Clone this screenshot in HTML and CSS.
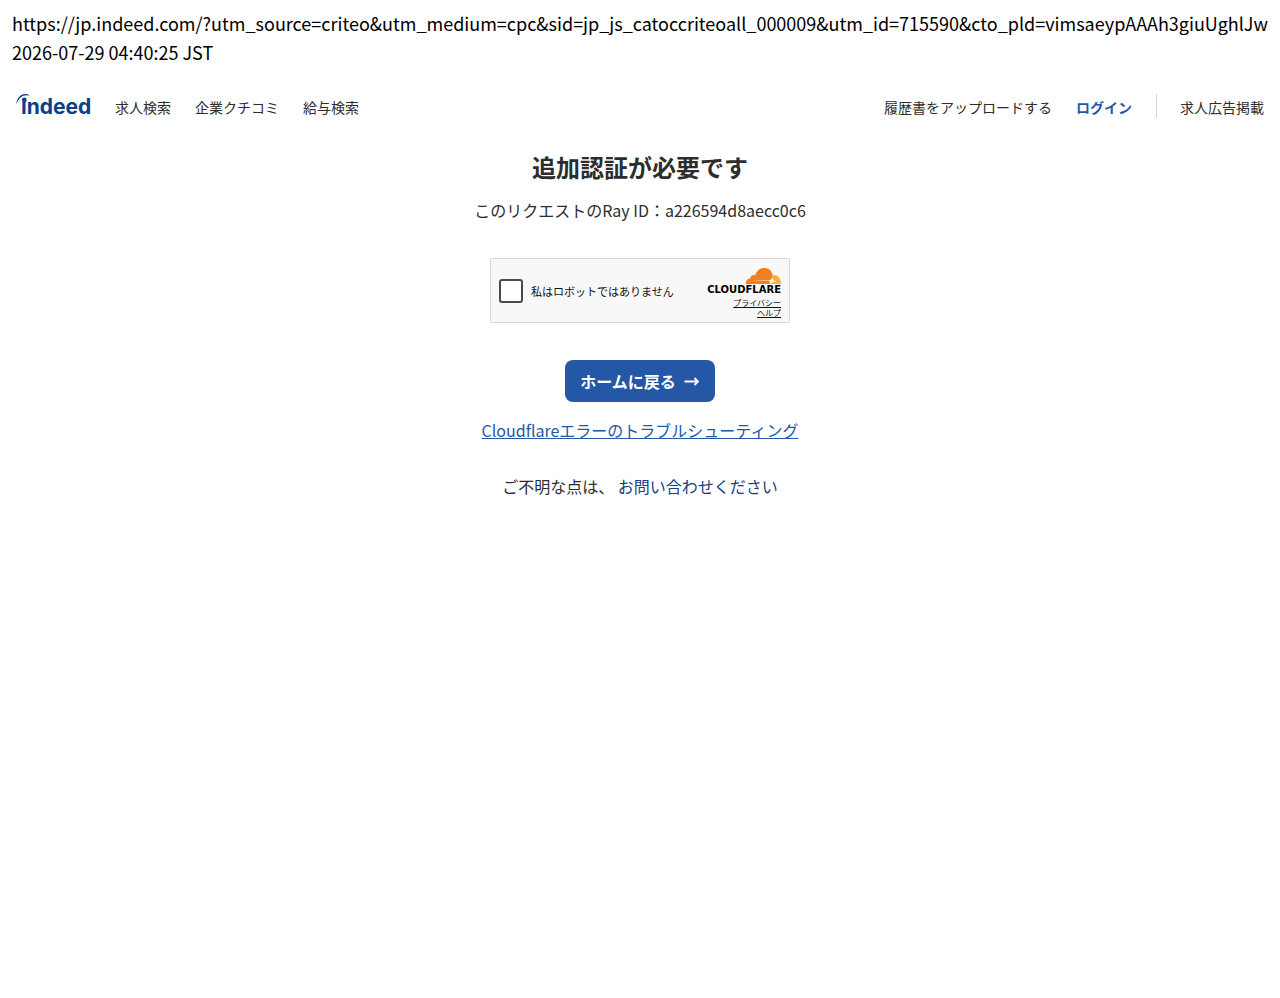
FILE: index.html
```
<!DOCTYPE html>
<html lang="ja">
<head>
<meta charset="utf-8">
<meta name="viewport" content="width=device-width, initial-scale=1">
<title>追加認証が必要です</title>
<link rel="stylesheet" href="styles.css">
</head>
<body>
<div class="capture-info">
  <p>https://jp.indeed.com/?utm_source=criteo&amp;utm_medium=cpc&amp;sid=jp_js_catoccriteoall_000009&amp;utm_id=715590&amp;cto_pld=vimsaeypAAAh3giuUghlJw</p>
  <p>2026-07-29 04:40:25 JST</p>
</div>
<header class="header">
  <nav class="nav">
    <a class="logo" href="#" aria-label="indeed">
      <svg width="75" height="28" viewBox="0 0 75 28">
        <text class="logo-text" x="5" y="21">ındeed</text>
        <circle cx="8.300" cy="7" r="2.400" fill="#0a3f8c"/>
        <path d="M.3 11.500C.6 5.500 4.300 1 9.500 1c1.700 0 3.200.6 4.100 1.800C8.500.9 3 3.500.3 11.500Z" fill="#0a3f8c"/>
      </svg>
    </a>
    <a href="#">求人検索</a>
    <a href="#">企業クチコミ</a>
    <a href="#">給与検索</a>
  </nav>
  <nav class="nav">
    <a href="#">履歴書をアップロードする</a>
    <a class="login" href="#">ログイン</a>
    <a class="employer" href="#">求人広告掲載</a>
  </nav>
</header>
<main class="main">
  <h1>追加認証が必要です</h1>
  <p class="ray">このリクエストのRay ID：a226594d8aecc0c6</p>
  <div class="widget">
    <label class="check"><input type="checkbox">私はロボットではありません</label>
    <div class="brand">
      <svg width="76" height="28" viewBox="0 0 76 28" role="img" aria-label="Cloudflare">
        <path d="M41 17c-.6-3 1.500-5.300 4.300-5.400-.2-2.700 2.300-4.400 4.800-3.200C51.500 4 54.800 1 59.100 1c4.300 0 7.500 2.700 8.500 6.600L68 12l-2 5Z" fill="#f38020"/>
        <path d="M67.300 8.100c5.200-.8 8.900 3 8.600 8.900H64.200l2.400-4.800Z" fill="#faae40"/>
        <path d="M47 13.600l16.500-.2c1.500 0 2.700-.7 3.200-1.900l.4-1 .7 1.800c.4 1 1.300 1.500 2.300 1.600l2.500.2-3 .3c-2 .2-3.200 1-3.800 2.600H64.900c.5-1.900.1-2.900-1.900-2.900Z" fill="#fff"/>
        <text class="cf-text" x="76" y="26" text-anchor="end">CLOUDFLARE</text>
      </svg>
      <a href="#">プライバシー</a>
      <a href="#">ヘルプ</a>
    </div>
  </div>
  <button class="home" type="button">ホームに戻る
    <svg width="16" height="16" viewBox="0 0 16 16" fill="none" stroke="currentColor" stroke-width="1.800"><path d="M.5 8.500H14M10.500 5 14 8.500 10.500 12"/></svg>
  </button>
  <a class="trouble" href="#">Cloudflareエラーのトラブルシューティング</a>
  <p class="contact">ご不明な点は、 <a href="#">お問い合わせください</a></p>
</main>
</body>
</html>
```
FILE: styles.css
```
body {
  margin: 0;
  background: #fff;
  color: #2d2d2d;
  font: 16px/24px "Noto Sans CJK JP", sans-serif;
}
p, h1 { margin: 0; }
a { color: inherit; text-decoration: none; }
svg { display: block; }

.capture-info {
  padding: 9px 12px 0;
  color: #000;
  font-size: 18px;
  line-height: 29px;
  overflow-wrap: anywhere;
}

.header {
  display: flex;
  justify-content: space-between;
  padding: 26px 16px 0;
  font-size: 14px;
}
.nav { display: flex; align-items: center; gap: 24px; }
.nav a { line-height: 28px; }
.logo-text { font: 700 21px Inter, sans-serif; fill: #0a3f8c; }
.nav .login { color: #2557a7; font-weight: 700; }
.nav .employer {
  padding-left: 24px;
  background: linear-gradient(#d4d2d0, #d4d2d0) 0 1px / 1px 24px no-repeat;
}

.main {
  display: flex;
  flex-direction: column;
  align-items: center;
  padding: 30px 16px;
}
h1 { font-size: 24px; line-height: 32px; font-weight: 700; }
.ray { margin-top: 15px; }

.widget {
  display: flex;
  justify-content: space-between;
  box-sizing: border-box;
  width: 300px;
  height: 65px;
  margin-top: 36px;
  padding: 0 8px;
  border: 1px solid #d6d6d6;
  border-radius: 2px;
  background: #f8f8f8;
}
.check {
  display: flex;
  align-items: center;
  gap: 8px;
  color: #111;
  font-size: 11px;
}
.check input {
  appearance: none;
  width: 24px;
  height: 24px;
  margin: 0;
  border: 2px solid #4a4a4a;
  border-radius: 3px;
  background: #fff;
}
.brand {
  display: flex;
  flex-direction: column;
  align-items: flex-end;
  padding-top: 8px;
  color: #111;
  font-size: 8px;
  line-height: 10px;
}
.brand svg { margin-bottom: 3px; }
.brand a { text-decoration: underline; }
.cf-text { font: 700 10px "DejaVu Sans", sans-serif; fill: #000; }

.home {
  display: flex;
  align-items: center;
  gap: 8px;
  margin-top: 37px;
  padding: 9px 15px;
  border: 0;
  border-radius: 8px;
  background: #2557a7;
  color: #fff;
  font: 700 16px/24px "Noto Sans CJK JP", sans-serif;
}
.trouble { margin-top: 16px; color: #2557a7; text-decoration: underline; }
.contact { margin-top: 32px; }
.contact a { color: #164081; }
```
